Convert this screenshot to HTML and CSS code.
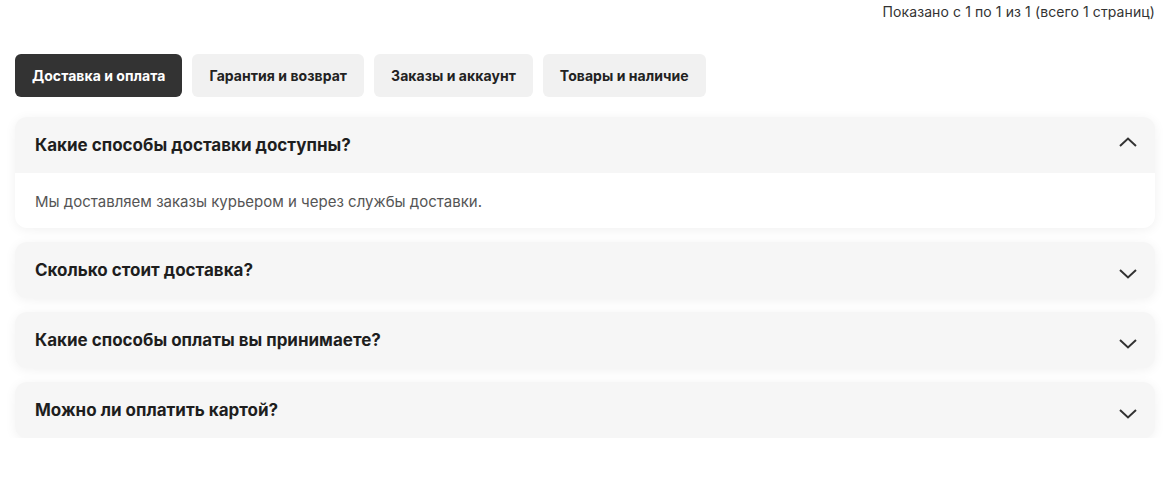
FILE: index.html
```html
<!DOCTYPE html>
<html lang="ru">
<head>
<meta charset="utf-8">
<link rel="stylesheet" href="styles.css">
</head>
<body>
<div class="page">
  <div class="pager-info">Показано с 1 по 1 из 1 (всего 1 страниц)</div>
  <div class="tabs">
    <button class="tab active">Доставка и оплата</button>
    <button class="tab">Гарантия и возврат</button>
    <button class="tab">Заказы и аккаунт</button>
    <button class="tab">Товары и наличие</button>
  </div>
  <div class="faq">
    <div class="item open">
      <div class="q">
        <span>Какие способы доставки доступны?</span>
        <svg class="chev" width="18" height="10" viewBox="0 0 18 10"><path d="M1 9 L9 1.5 L17 9" fill="none" stroke="#333" stroke-width="2"/></svg>
      </div>
      <div class="a">Мы доставляем заказы курьером и через службы доставки.</div>
    </div>
    <div class="item">
      <div class="q">
        <span>Сколько стоит доставка?</span>
        <svg class="chev" width="18" height="10" viewBox="0 0 18 10"><path d="M1 1 L9 8.5 L17 1" fill="none" stroke="#333" stroke-width="2"/></svg>
      </div>
    </div>
    <div class="item">
      <div class="q">
        <span>Какие способы оплаты вы принимаете?</span>
        <svg class="chev" width="18" height="10" viewBox="0 0 18 10"><path d="M1 1 L9 8.5 L17 1" fill="none" stroke="#333" stroke-width="2"/></svg>
      </div>
    </div>
    <div class="item">
      <div class="q">
        <span>Можно ли оплатить картой?</span>
        <svg class="chev" width="18" height="10" viewBox="0 0 18 10"><path d="M1 1 L9 8.5 L17 1" fill="none" stroke="#333" stroke-width="2"/></svg>
      </div>
    </div>
  </div>
</div>
</body>
</html>
```
FILE: styles.css
```css
* { box-sizing: border-box; }
html, body { margin: 0; padding: 0; background: #fff; }
body { font-family: Inter, "Noto Sans", sans-serif; color: #222; }
.page { padding: 0 15px; }
.pager-info {
  text-align: right;
  font-size: 14px;
  line-height: 24px;
  color: #333;
  letter-spacing: 0.1px;
}
.tabs {
  display: flex;
  gap: 10px;
  margin-top: 30px;
}
.tab {
  font-family: Inter, "Noto Sans", sans-serif;
  font-weight: 700;
  font-size: 14px;
  height: 43px;
  padding: 0 17px;
  border: none;
  border-radius: 6px;
  background: #f1f1f1;
  color: #222;
  letter-spacing: 0.05px;
}
.tab.active { background: #333; color: #fff; }
.faq {
  margin-top: 20px;
  display: flex;
  flex-direction: column;
  gap: 14px;
}
.item {
  border-radius: 12px;
  overflow: hidden;
  background: #f6f6f6;
  box-shadow: 0 2px 12px rgba(0,0,0,0.06);
}
.q {
  height: 56px;
  display: flex;
  align-items: center;
  justify-content: space-between;
  padding: 0 18px 0 20px;
  font-weight: 700;
  font-size: 17px;
  color: #1e1e1e;
}
.chev { display: block; }
.open .chev { margin-top: -6px; }
.item:not(.open) .chev { margin-top: 7px; }
.a {
  background: #fff;
  font-size: 15px;
  color: #555;
  padding: 19px 20px 16px;
  line-height: 20px;
}
```
